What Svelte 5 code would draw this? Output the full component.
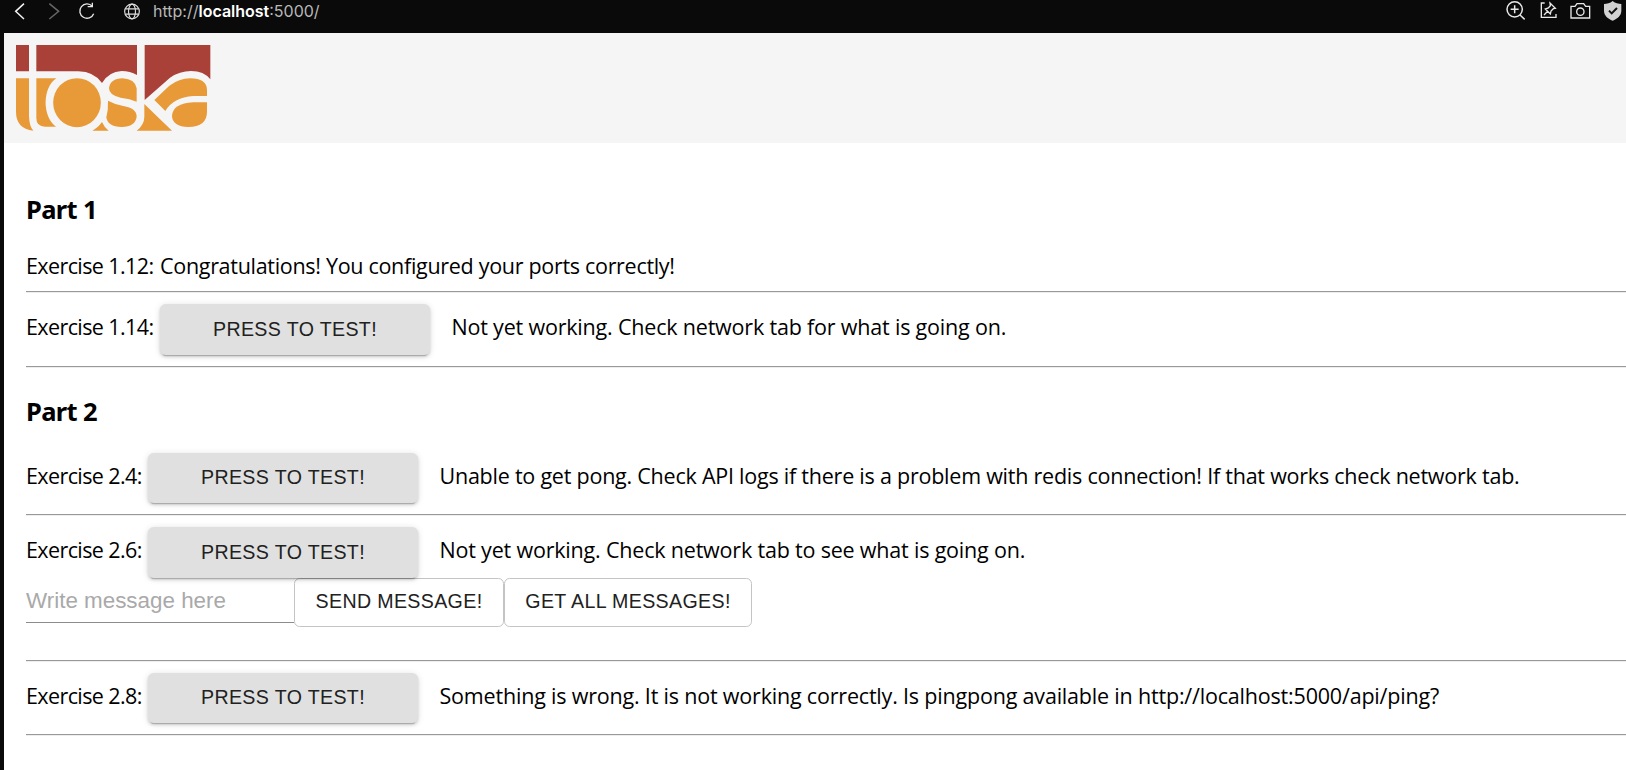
<script>
  let message = $state('');
</script>

{#snippet test()}
  <button class="press">PRESS TO TEST!</button>
{/snippet}

<div class="window">
  <nav class="toolbar">
    <svg class="nav" width="100" height="32" viewBox="0 0 300 96" fill="none">
      <path d="M72 11 47 34l25 23" stroke="#f2f2f2" stroke-width="4.5" />
      <path d="m148 11 28 23-28 23" stroke="#666" stroke-width="4.5" />
      <path d="M277 19a21.500 21.500 0 1 0 4 22M263 20h14V8" stroke="#e8e8e8" stroke-width="4" />
    </svg>
    <svg class="globe" width="16" height="17" viewBox="0 0 17 17" fill="none" stroke="#ddd" stroke-width="1.25">
      <circle cx="8.5" cy="8.5" r="7.8" />
      <ellipse cx="8.5" cy="8.5" rx="3.7" ry="7.8" />
      <path d="M1.6 5.8h13.8M1.6 11.2h13.8" />
    </svg>
    <span class="url">http://<b>localhost</b>:5000/</span>
    <svg class="tools" width="140" height="32" viewBox="0 0 420 96" fill="none" stroke="#e8e8e8" stroke-width="4.5">
      <circle cx="86" cy="28" r="23" />
      <path d="M102 45l14 13M74 28h24M86 16v24" />
      <path d="M176 9h-10v43h44V42M192 9l16 16-6 1-7 7-2 9-15-15 9-3 6-7ZM185 34l-11 11" stroke-width="4" />
      <path d="M255 19h12l6-8h20l6 8h12v35h-56Z" stroke-width="4" />
      <circle cx="283" cy="35" r="11" stroke-width="4" />
      <path d="M380 3c8 7 17 9 26 9v20c0 15-12 24-26 30-14-6-26-15-26-30V12c9 0 18-2 26-9Z" fill="#d2d2d2" stroke="none" />
      <path d="m369 32 8 8 16-16" stroke="#111" stroke-width="6" />
    </svg>
  </nav>

  <main>
    <header>
      <svg width="226" height="110" viewBox="12 9 678 330" role="img" aria-label="toska">
        <g fill="#a94138">
          <path d="M48 45h39v79H48ZM109 45h302v90Q390 123 365 123Q326 125 306 159Q282 125 235 124H109Z" />
          <path d="M434 45h197v103Q612 123 573 123Q539 123 510 143L434 210Z" />
        </g>
        <g fill="#e99a38">
          <path d="M48 145h39v113Q88 290 100 302Q48 296 48 245Z" />
          <path d="M109 145h60C127 173 126 260 168 290h-33Q109 290 109 264Z" />
          <ellipse cx="231" cy="218" rx="71.500" ry="73.500" />
          <path d="M277 302Q293 294 306 276Q312 291 326 302Z" />
          <path d="M327 175Q330 146 368 145Q405 147 410 175V215Q390 206 362 203Q327 196 327 175Z" />
          <path d="M324 212Q344 223 370 228Q410 235 410 260Q406 290 365 291Q322 290 319 262Q325 240 324 212Z" />
          <path d="M433 222 516 302H410Q433 284 433 260Z" />
          <path d="M463 210 508 167Q537 146 570 145Q621 146 621 180V198H580Q520 202 496 243Z" />
          <path d="M621 217v28Q621 290 565 291Q518 290 516 258Q518 220 580 217Z" />
        </g>
      </svg>
    </header>

    <div class="content">
      <h3 class="first">Part 1</h3>
      <div class="line"><span class="label">Exercise 1.12:</span><span class="result">Congratulations! You configured your ports correctly!</span></div>
      <hr />
      <div class="row tall"><span class="label">Exercise 1.14:</span>{@render test()}<span class="note">Not yet working. Check network tab for what is going on.</span></div>
      <hr />
      <h3 class="second">Part 2</h3>
      <div class="row"><span class="label short">Exercise 2.4:</span>{@render test()}<span class="note long">Unable to get pong. Check API logs if there is a problem with redis connection! If that works check network tab.</span></div>
      <hr />
      <div class="row compact"><span class="label short">Exercise 2.6:</span>{@render test()}<span class="note">Not yet working. Check network tab to see what is going on.</span></div>
      <div class="form">
        <input placeholder="Write message here" bind:value={message} />
        <button class="outlined send">SEND MESSAGE!</button>
        <button class="outlined all">GET ALL MESSAGES!</button>
      </div>
      <hr />
      <div class="row"><span class="label short">Exercise 2.8:</span>{@render test()}<span class="note">Something is wrong. It is not working correctly. Is pingpong available in http://localhost:5000/api/ping?</span></div>
      <hr />
    </div>
  </main>
</div>

<style>
  :global(body) { margin: 0; background: #0a0a0a; overflow: hidden; }
  .window { width: 1626px; height: 770px; overflow: hidden; display: flex; flex-direction: column; }
  .toolbar { height: 33px; flex: none; display: flex; align-items: flex-start; background: #0a0a0a; }
  .nav { flex: none; margin-right: 24px; }
  .globe { margin: 3px 13px 0 0; flex: none; }
  .url { font: 16px/22px Inter, sans-serif; color: #b8b8b8; width: 1333px; }
  .url b { font-weight: 600; color: #fff; }
  .tools { flex: none; }
  main { flex: 1; margin-left: 4px; background: #fff; }
  header { height: 110px; background: #f5f5f5; }
  header svg { display: block; }
  .content { padding-left: 22px; font: 21.5px/30px 'Open Sans', 'Noto Sans', sans-serif; color: #000; white-space: nowrap; }
  h3 { margin: 0; font: bold 25.5px/36px 'Noto Sans', sans-serif; letter-spacing: -.65px; }
  .first { padding-top: 48px; height: 60px; }
  .line { display: flex; height: 40px; }
  .label { width: 134px; flex: none; letter-spacing: -.6px; }
  .short { width: 122px; }
  .result { letter-spacing: -.3px; }
  hr { box-sizing: border-box; height: 2px; margin: 0; border: 0; border-top: 1px solid #999; border-bottom: 1px solid #eee; }
  .row { display: flex; height: 61px; padding-top: 11px; }
  .row.tall { height: 62px; }
  .row.compact { height: 51px; }
  .row .label, .row .note { margin-top: 8px; }
  .second { padding-top: 25px; height: 49px; }
  .note { margin-left: 21.5px; letter-spacing: -.19px; }
  .note.long { letter-spacing: -.23px; }
  button { font: 19.6px/27px 'Liberation Sans', Arial, sans-serif; letter-spacing: .36px; color: #212121; padding: 0; border-radius: 5.6px; white-space: nowrap; box-sizing: border-box; }
  .press { position: relative; z-index: 1; width: 270px; height: 50px; padding-bottom: 1px; flex: none; border: 0; background: #e0e0e0; box-shadow: 0 4px 1px -3px #0003, 0 2px 3px #00000024, 0 1px 7px #0000001f; }
  .tall .press, .compact .press { height: 51px; padding-bottom: 0; }
  .form { display: flex; align-items: flex-start; height: 82px; }
  input { width: 268px; height: 45px; box-sizing: border-box; padding: 2px 0 0; border: 0; border-bottom: 1px solid #8c8c8c; background: transparent; font: 22.4px 'Liberation Sans', Arial, sans-serif; letter-spacing: 0; outline: 0; }
  input::placeholder { color: #a9a9a9; opacity: 1; }
  .outlined { height: 49px; padding-bottom: 2px; background: transparent; border: 1px solid #c4c4c4; }
  .send { width: 210px; }
  .all { width: 248px; }
</style>
